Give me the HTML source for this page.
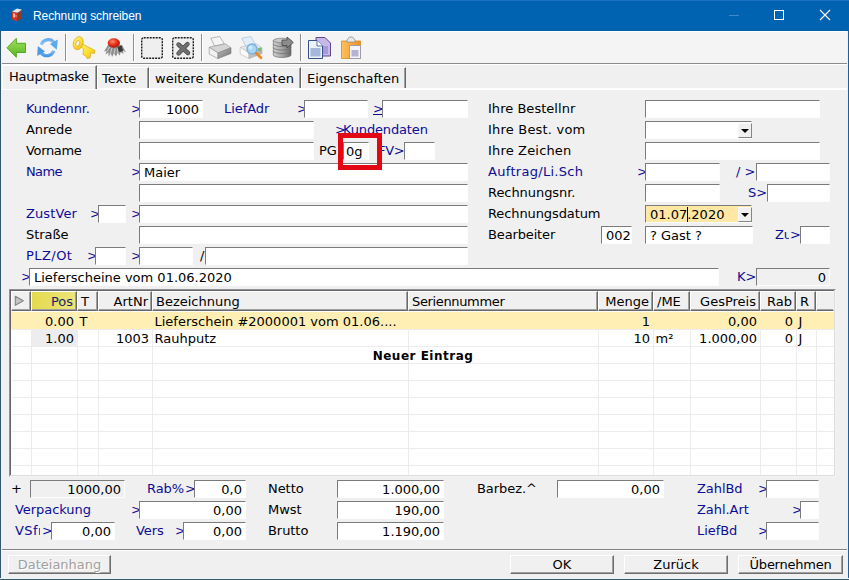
<!DOCTYPE html>
<html><head><meta charset="utf-8"><title>Rechnung schreiben</title>
<style>
html,body{margin:0;padding:0;}
body{width:849px;height:580px;overflow:hidden;background:#f0f0f0;position:relative;font-family:"DejaVu Sans","Liberation Sans",sans-serif;font-size:13px;color:#000;}
#win{position:absolute;left:0;top:0;width:849px;height:580px;background:#f0f0f0;overflow:hidden;}
#win div{position:absolute;box-sizing:border-box;white-space:nowrap;}
#title{left:0;top:0;width:849px;height:31px;background:#0063b1;box-shadow:inset 0 1px 0 #1874c2;}
#title .t{left:33px;top:9px;letter-spacing:-0.1px;font-family:"Liberation Sans",sans-serif;font-size:12px;color:#fff;line-height:15px;}
.l{line-height:17px;height:17px;font-size:13px;letter-spacing:-0.06px;}
.b{color:#0c0c96;}
.f{background:#fff;border:1px solid;border-color:#7b7b7b #fdfdfd #fdfdfd #7b7b7b;line-height:16px;font-size:13px;padding:1px 3px 0 4px;overflow:hidden;}
.r{text-align:right;}
.g{background:#f0f0f0 !important;}
.y{background:#ffe8a6 !important;}
.btn{height:19px;border:1px solid;border-color:#fff #6d6d6d #6d6d6d #fff;box-shadow:inset -1px -1px 0 #a0a0a0;background:#f0f0f0;text-align:center;line-height:18px;font-size:13px;overflow:hidden;}
.dis{color:#a0a0a0;text-shadow:1px 1px 0 #fff;}
.tab{font-size:13px;line-height:17px;}
.sep{width:2px;height:27px;top:34px;border-left:1px solid #8e8e8e;border-right:1px solid #fff;}
.hc{top:291px;height:20px;border:1px solid;border-color:#fff #696969 #696969 #fff;box-shadow:inset -1px -1px 0 #a0a0a0;background:#f0f0f0;line-height:19px;font-size:13px;padding:0 3px 0 3px;overflow:hidden;}
.c{height:17px;line-height:19px;font-size:13px;padding:0 3px 0 2.5px;overflow:hidden;}
.dd{width:14px;height:15px;background:#f0f0f0;border:1px solid;border-color:#f8f8f8 #858585 #858585 #f8f8f8;}
.dd:after{content:"";position:absolute;left:2px;top:5px;border:4px solid transparent;border-top:4px solid #000;border-bottom:none;}
</style></head><body>
<div id="win">
<div id="title"><div class="t">Rechnung schreiben</div>
<svg style="position:absolute;left:0;top:0" width="30" height="31" viewBox="0 0 30 31"><path d="M12 11.500 L17.500 12.800 L17.500 21.200 L12 19.500 Z" fill="#d6341e"/><path d="M17.500 12.800 L22 9.700 L22 18.300 L17.500 21.200 Z" fill="#8c3c24"/><path d="M12 11.500 L17 8.600 L22 9.700 L17.500 12.800 Z" fill="#ece6e0"/><path d="M13.300 13.300 L14.800 13.600 L14.800 17.600 L13.300 17.300 Z" fill="#f6e0d8"/><path d="M15.500 14.800 L16.500 15 L16.500 17 L15.500 16.800 Z" fill="#f0a890"/></svg>
<svg style="position:absolute;left:720px;top:0" width="129" height="31" viewBox="0 0 129 31"><path d="M9 15.5 H19" stroke="#3f88cc" stroke-width="1"/><rect x="54.5" y="10.5" width="9" height="9" fill="none" stroke="#fff" stroke-width="1"/><path d="M100 10 L110 20 M110 10 L100 20" stroke="#fff" stroke-width="1.1"/></svg>
</div>
<div style="left:1px;top:31px;width:847px;height:32px;background:#f4f4f4;border-top:1px solid #fff;"></div>
<div style="left:1px;top:63px;width:847px;height:1px;background:#8a8a8a;"></div>
<div style="left:1px;top:64px;width:847px;height:1px;background:#fff;"></div>
<div class="sep" style="left:65px"></div>
<div class="sep" style="left:133px"></div>
<div class="sep" style="left:201px"></div>
<div class="sep" style="left:300px"></div>
<svg style="position:absolute;left:0;top:31px" width="380" height="32" viewBox="0 31 380 32">
<defs>
<linearGradient id="gg" x1="0" y1="0" x2="0" y2="1"><stop offset="0" stop-color="#a4e05c"/><stop offset="1" stop-color="#58b424"/></linearGradient>
<linearGradient id="gb" x1="0" y1="0" x2="0" y2="1"><stop offset="0" stop-color="#8cc8f8"/><stop offset="1" stop-color="#2a7fd8"/></linearGradient>
<linearGradient id="gk" x1="0" y1="0" x2="1" y2="1"><stop offset="0" stop-color="#fff27a"/><stop offset="0.5" stop-color="#ffe030"/><stop offset="1" stop-color="#f0b818"/></linearGradient>
<radialGradient id="gr" cx="0.4" cy="0.35" r="0.7"><stop offset="0" stop-color="#ff8a6a"/><stop offset="0.5" stop-color="#e8301c"/><stop offset="1" stop-color="#a81408"/></radialGradient>
<linearGradient id="gp" x1="0" y1="0" x2="0" y2="1"><stop offset="0" stop-color="#f4f4f4"/><stop offset="1" stop-color="#a8a8a8"/></linearGradient>
<linearGradient id="gd" x1="0" y1="0" x2="1" y2="0"><stop offset="0" stop-color="#cfcfcf"/><stop offset="0.5" stop-color="#a4a4a4"/><stop offset="1" stop-color="#6a6a6a"/></linearGradient>
<linearGradient id="go" x1="0" y1="0" x2="1" y2="0"><stop offset="0" stop-color="#ffc060"/><stop offset="1" stop-color="#f09020"/></linearGradient>
<linearGradient id="gb2" gradientUnits="userSpaceOnUse" x1="0" y1="37" x2="0" y2="59"><stop offset="0" stop-color="#5aa4ea"/><stop offset="0.45" stop-color="#9ccdf6"/><stop offset="0.55" stop-color="#8cc4f4"/><stop offset="1" stop-color="#2f86dc"/></linearGradient>
<linearGradient id="gpr" x1="0" y1="0" x2="1" y2="1"><stop offset="0" stop-color="#c0c0c0"/><stop offset="1" stop-color="#6c6c6c"/></linearGradient><linearGradient id="gpr2" x1="0" y1="0" x2="1" y2="1"><stop offset="0" stop-color="#dcdcdc"/><stop offset="1" stop-color="#a0a0a0"/></linearGradient>
</defs>
<!-- back arrow -->
<path d="M7 47.800 L16.300 38.300 L16.300 43.300 L25.500 43.300 L25.500 52.500 L16.300 52.500 L16.300 57.300 Z" fill="url(#gg)" stroke="#52a822" stroke-width="1" stroke-linejoin="round"/>
<!-- refresh -->
<g fill="none" stroke="url(#gb2)" stroke-width="3.200">
<path d="M41.300 44.800 A7.300 7.300 0 0 1 54 42.500"/>
<path d="M53.800 50.800 A7.300 7.300 0 0 1 41.200 53"/>
</g>
<path d="M50 44 L57.800 39.500 L56.800 49.800 Z" fill="#5ea8ec"/>
<path d="M45 51.500 L37.200 56 L37.800 46 Z" fill="#4a9ae6"/>
<!-- key -->
<g stroke="#d8a818" stroke-width="0.7" stroke-linejoin="round">
<path d="M81.500 43.500 L95 50.500 L94.500 53.500 L91 52.800 L90 58 L87 58.500 L86 56 L83 54.500 L83.500 49 L81 47 Z" fill="url(#gk)"/>
<ellipse cx="78.200" cy="43.200" rx="4.800" ry="6.700" fill="url(#gk)" transform="rotate(18 78.200 43.200)"/>
<ellipse cx="77.800" cy="43.400" rx="1.900" ry="3" fill="#f3f3f3" transform="rotate(18 77.800 43.400)"/>
</g>
<!-- bug -->
<g>
<path d="M108 45 L104 51.500 L106.500 51 L105.500 54.500 L108.500 52.500 L108.500 56.500 L111 53.500 L112 57 L114 53.500 L116 56.500 L117.500 53 L120 55.500 L120.500 52 L123.500 54 L123 50.500 L126 52.500 L122 45 Z" fill="#8e8e8e"/>
<path d="M117.500 47 L121.500 45.500 L123 50.500 L120.500 52 L118.500 51.500 Z" fill="#3a3a3a"/>
<path d="M109.500 47 L106.500 52 M112 48 L110 54.500 M115 48.500 L114 54.500 M117.500 48.500 L118 53.500" stroke="#d4d4d4" stroke-width="0.900" fill="none"/>
<ellipse cx="113.800" cy="43" rx="6.200" ry="4.700" fill="url(#gr)"/>
</g>
<!-- dotted square -->
<rect x="141.700" y="37.700" width="20.600" height="20.600" rx="2" fill="#efefef" stroke="#1c1c1c" stroke-width="1.400" stroke-dasharray="2 1"/>
<rect x="172.700" y="37.700" width="20.600" height="20.600" rx="2" fill="#efefef" stroke="#1c1c1c" stroke-width="1.400" stroke-dasharray="2 1"/>
<path d="M178.500 44.500 L188 53 M187.500 44 L178.500 53.500" stroke="#4c4c4c" stroke-width="4.400" stroke-linecap="round"/>
<path d="M178.500 44.500 L188 53 M187.500 44 L178.500 53.500" stroke="#707070" stroke-width="3" stroke-linecap="round"/>
<!-- printer -->
<g transform="translate(0 0)">
<path d="M210.800 38.200 L219.800 36.500 L224.400 44 L214.700 46.200 Z" fill="#f4f4f4" stroke="#9c9c9c" stroke-width="0.700" stroke-linejoin="round"/>
<path d="M209.200 47.300 L214.500 46 L224.500 44 L225.500 43.900 L231 47.800 L218 53 Z" fill="#d4d4d4" stroke="#8c8c8c" stroke-width="0.600" stroke-linejoin="round"/>
<path d="M209.200 47.300 L218 53 L218 58.600 L209.200 54 Z" fill="#f2f2f2" stroke="#8c8c8c" stroke-width="0.600" stroke-linejoin="round"/>
<path d="M218 53 L231 47.800 L231 53.500 L218 58.600 Z" fill="url(#gpr)" stroke="#7c7c7c" stroke-width="0.600" stroke-linejoin="round"/>
</g>
<!-- preview -->
<g transform="translate(31 0)">
<path d="M210.800 38.200 L219.800 36.500 L224.400 44 L214.700 46.200 Z" fill="#e4eef8" stroke="#a8c0d8" stroke-width="0.700" stroke-linejoin="round"/>
<path d="M209.200 47.300 L214.500 46 L224.500 44 L225.500 43.900 L231 47.800 L218 53 Z" fill="#e8e8e8" stroke="#b8b8b8" stroke-width="0.600" stroke-linejoin="round"/>
<path d="M209.200 47.300 L218 53 L218 58.600 L209.200 54 Z" fill="#fafafa" stroke="#b8b8b8" stroke-width="0.600" stroke-linejoin="round"/>
<path d="M218 53 L231 47.800 L231 53.500 L218 58.600 Z" fill="url(#gpr2)" stroke="#a8a8a8" stroke-width="0.600" stroke-linejoin="round"/>
</g>
<circle cx="252" cy="49" r="5" fill="#a8d6f2" stroke="#78b0dc" stroke-width="1.400"/>
<circle cx="250.500" cy="47.500" r="2" fill="#d0ecfa"/>
<path d="M256.300 53.300 L261 57.800" stroke="#f08828" stroke-width="2.800" stroke-linecap="round"/>
<path d="M258 48 L261 47.500 L261 51 L258.500 51.500 Z" fill="#78b878"/>
<!-- db -->
<g>
<path d="M273.300 40.500 L273.300 55 A8.800 2.500 0 0 0 291 55 L291 40.500 Z" fill="url(#gd)" stroke="#5c5c5c" stroke-width="0.600"/>
<ellipse cx="282.150" cy="40.500" rx="8.850" ry="2.300" fill="#c8c8c8" stroke="#6c6c6c" stroke-width="0.600"/>
<path d="M273.300 44 A8.800 2.500 0 0 0 291 44 M273.300 47.500 A8.800 2.500 0 0 0 291 47.500 M273.300 51 A8.800 2.500 0 0 0 291 51" fill="none" stroke="#6c6c6c" stroke-width="0.700"/>
<path d="M282 40 L287 40 L287 37 L293.300 42.500 L287 48 L287 45.500 L282 45.500 Z" fill="#8c8c8c" stroke="#464646" stroke-width="0.800" stroke-linejoin="round"/>
</g>
<!-- copy -->
<g>
<path d="M316 37.500 L325 37.500 L330.500 43 L330.500 56 L316 56 Z" fill="#c8b8e8" stroke="#5a4890" stroke-width="1"/>
<path d="M320 46 L328 46 L328 54 L320 54 Z" fill="#a898d8"/>
<path d="M308.500 40.500 L317 40.500 L322.500 46 L322.500 58.500 L308.500 58.500 Z" fill="#eef2fa" stroke="#38508c" stroke-width="1"/>
<path d="M310.500 48 L320.500 48 L320.500 56.500 L310.500 56.500 Z" fill="#a4b8dc"/>
<path d="M317 40.500 L317 46 L322.500 46" fill="#fff" stroke="#38508c" stroke-width="0.8"/>
</g>
<!-- paste -->
<g>
<path d="M341.500 41 L360.500 41 L360.500 58.500 L341.500 58.500 Z" fill="url(#go)" stroke="#d88820" stroke-width="0.8"/>
<path d="M347 42 L347 40 L349.500 37 L352.500 37 L355 40 L355 42 Z" fill="#e8e8e8" stroke="#909090" stroke-width="0.8"/>
<path d="M349.500 45.500 L360.500 45.500 L360.500 58.500 L349.500 58.500 Z" fill="#f4f4fa" stroke="#9090b0" stroke-width="0.8"/>
<path d="M351.500 50 L358.500 50 L358.500 56.500 L351.500 56.500 Z" fill="#b4b4d0"/>
</g>
</svg>

<div style="left:2px;top:88px;width:845px;height:2px;background:#fdfdfd;"></div>
<div style="left:2px;top:65px;width:95px;height:24px;background:#f0f0f0;border:1px solid;border-color:#fff #696969 transparent #fff;border-bottom:none;box-shadow:inset -1px 0 0 #a0a0a0;"></div>
<div class="tab" style="left:9px;top:68px;letter-spacing:-0.2px;">Hauptmaske</div>
<div style="left:97px;top:67px;width:52px;height:21px;border:1px solid;border-color:#fff #696969 transparent #fff;border-bottom:none;box-shadow:inset -1px 0 0 #a0a0a0;"></div>
<div class="tab" style="left:102px;top:70px;">Texte</div>
<div style="left:149px;top:67px;width:152px;height:21px;border:1px solid;border-color:#fff #696969 transparent #fff;border-bottom:none;box-shadow:inset -1px 0 0 #a0a0a0;"></div>
<div class="tab" style="left:155px;top:70px;">weitere Kundendaten</div>
<div style="left:301px;top:67px;width:105px;height:21px;border:1px solid;border-color:#fff #696969 transparent #fff;border-bottom:none;box-shadow:inset -1px 0 0 #a0a0a0;"></div>
<div class="tab" style="left:307px;top:70px;">Eigenschaften</div>
<div class="l b" style="left:26px;top:100px;letter-spacing:-0.2px;">Kundennr.</div>
<div class="l b" style="left:131px;top:100px;">&gt;</div>
<div class="f r" style="left:139px;top:100px;width:64px;height:18px;">1000</div>
<div class="l b" style="left:224px;top:100px;">LiefAdr</div>
<div class="l b" style="left:297px;top:100px;">&gt;</div>
<div class="f " style="left:304px;top:100px;width:64px;height:18px;"></div>
<div class="l b" style="left:373px;top:100px;"><u>&gt;</u></div>
<div class="f " style="left:382px;top:100px;width:86px;height:18px;"></div>
<div class="l" style="left:26px;top:121px;">Anrede</div>
<div class="f " style="left:139px;top:121px;width:175px;height:18px;"></div>
<div class="l b" style="left:335px;top:121px;">&gt;</div>
<div class="l b" style="left:343px;top:121px;letter-spacing:-0.15px;">Kundendaten</div>
<div class="l" style="left:26px;top:142px;letter-spacing:-0.35px;">Vorname</div>
<div class="f " style="left:139px;top:142px;width:175px;height:18px;"></div>
<div class="l" style="left:319px;top:142px;">PG</div>
<div class="f " style="left:343px;top:142px;width:26px;height:18px;padding-left:2px;">0g</div>
<div class="l b" style="left:378px;top:142px;letter-spacing:-0.3px;">FV&gt;</div>
<div class="f " style="left:404px;top:142px;width:31px;height:18px;"></div>
<div class="l b" style="left:26px;top:163px;letter-spacing:-0.6px;">Name</div>
<div class="l b" style="left:131px;top:163px;">&gt;</div>
<div class="f " style="left:139px;top:163px;width:329px;height:18px;">Maier</div>
<div class="f " style="left:139px;top:184px;width:329px;height:18px;"></div>
<div class="l b" style="left:26px;top:205px;letter-spacing:0.1px;">ZustVer</div>
<div class="l b" style="left:90px;top:205px;">&gt;</div>
<div class="f " style="left:98px;top:205px;width:28px;height:18px;"></div>
<div class="l b" style="left:131px;top:205px;">&gt;</div>
<div class="f " style="left:139px;top:205px;width:329px;height:18px;"></div>
<div class="l" style="left:26px;top:226px;">Straße</div>
<div class="f " style="left:139px;top:226px;width:329px;height:18px;"></div>
<div class="l b" style="left:26px;top:247px;letter-spacing:0.45px;">PLZ/Ot</div>
<div class="l b" style="left:87px;top:247px;">&gt;</div>
<div class="f " style="left:95px;top:247px;width:31px;height:18px;"></div>
<div class="l b" style="left:131px;top:247px;">&gt;</div>
<div class="f " style="left:139px;top:247px;width:54px;height:18px;"></div>
<div class="l" style="left:200px;top:247px;">/</div>
<div class="f " style="left:205px;top:247px;width:263px;height:18px;"></div>
<div class="l b" style="left:21px;top:268px;">&gt;</div>
<div class="f " style="left:29px;top:268px;width:690px;height:18px;">Lieferscheine vom 01.06.2020</div>
<div style="left:338px;top:133px;width:44px;height:37px;border:5px solid #e30613;"></div>
<div class="l" style="left:488px;top:100px;letter-spacing:0.03px;">Ihre Bestellnr</div>
<div class="f " style="left:645px;top:100px;width:175px;height:18px;"></div>
<div class="l" style="left:488px;top:121px;letter-spacing:0.2px;">Ihre Best. vom</div>
<div class="f " style="left:645px;top:121px;width:107px;height:18px;"></div>
<div class="dd" style="left:738px;top:123px"></div>
<div class="l" style="left:488px;top:142px;letter-spacing:0.17px;">Ihre Zeichen</div>
<div class="f " style="left:645px;top:142px;width:175px;height:18px;"></div>
<div class="l b" style="left:488px;top:163px;letter-spacing:0.3px;">Auftrag/Li.Sch</div>
<div class="l b" style="left:637px;top:163px;">&gt;</div>
<div class="f " style="left:645px;top:163px;width:75px;height:18px;"></div>
<div class="l b" style="left:736px;top:163px;">/ &gt;</div>
<div class="f " style="left:756px;top:163px;width:74px;height:18px;"></div>
<div class="l" style="left:488px;top:184px;">Rechnungsnr.</div>
<div class="f " style="left:645px;top:184px;width:75px;height:18px;"></div>
<div class="l b" style="left:748px;top:184px;">S&gt;</div>
<div class="f " style="left:767px;top:184px;width:63px;height:18px;"></div>
<div class="l" style="left:488px;top:205px;letter-spacing:-0.1px;">Rechnungsdatum</div>
<div class="f y" style="left:645px;top:205px;width:107px;height:18px;">01.07.2020</div>
<div class="dd" style="left:738px;top:207px"></div>
<div style="left:687px;top:207px;width:1px;height:15px;background:#000"></div>
<div class="l" style="left:488px;top:226px;letter-spacing:-0.14px;">Bearbeiter</div>
<div class="f " style="left:601px;top:226px;width:31px;height:18px;">002</div>
<div class="f " style="left:645px;top:226px;width:108px;height:18px;">? Gast ?</div>
<div class="l b" style="left:775px;top:226px;">Zu</div>
<div class="l b" style="left:789px;top:226px;background:#f0f0f0;padding-left:1px;">&gt;</div>
<div class="f " style="left:800px;top:226px;width:30px;height:18px;"></div>
<div class="l b" style="left:737px;top:268px;">K&gt;</div>
<div class="f r g" style="left:756px;top:268px;width:74px;height:18px;">0</div>
<div style="left:9px;top:289px;width:827px;height:188px;background:#fff;border:1px solid;border-color:#8e9296 #f4f4f4 #f4f4f4 #8e9296;box-shadow:inset -1px -1px 0 #dcdcdc, inset 1px 1px 0 #666;"></div>
<div class="hc " style="left:11px;width:20px;"></div>
<div class="hc r" style="left:31px;width:46px;background:linear-gradient(90deg,#e4da4e,#ece57c);color:#1c1c6c;">Pos</div>
<div class="hc " style="left:77px;width:21px;">T</div>
<div class="hc r" style="left:98px;width:54px;">ArtNr</div>
<div class="hc " style="left:152px;width:256px;">Bezeichnung</div>
<div class="hc " style="left:408px;width:190px;"><span style="letter-spacing:-0.35px">Seriennummer</span></div>
<div class="hc r" style="left:598px;width:55px;">Menge</div>
<div class="hc " style="left:653px;width:37px;">/ME</div>
<div class="hc r" style="left:690px;width:70px;">GesPreis</div>
<div class="hc r" style="left:760px;width:36px;">Rab</div>
<div class="hc " style="left:796px;width:20px;">R</div>
<div class="hc " style="left:816px;width:18px;border-right-color:#f0f0f0;box-shadow:inset 0 -1px 0 #a0a0a0;"></div>
<svg style="position:absolute;left:13px;top:294px" width="14" height="14" viewBox="0 0 14 14"><path d="M2.300 2.300 L10.300 6.800 L2.300 11.300 Z" fill="#c4c4c4" stroke="#848484" stroke-width="1.100" stroke-linejoin="round"/></svg>
<div style="left:11px;top:312px;width:823px;height:17px;background:#ffefb5;"></div>
<div style="left:32px;top:330px;width:45px;height:16px;background:#ededef;"></div>
<div style="left:12px;top:329px;width:822px;height:1px;background:#ececec;"></div>
<div style="left:12px;top:346px;width:822px;height:1px;background:#ececec;"></div>
<div style="left:12px;top:363px;width:822px;height:1px;background:#ececec;"></div>
<div style="left:12px;top:380px;width:822px;height:1px;background:#ececec;"></div>
<div style="left:12px;top:397px;width:822px;height:1px;background:#ececec;"></div>
<div style="left:12px;top:414px;width:822px;height:1px;background:#ececec;"></div>
<div style="left:12px;top:431px;width:822px;height:1px;background:#ececec;"></div>
<div style="left:12px;top:448px;width:822px;height:1px;background:#ececec;"></div>
<div style="left:12px;top:465px;width:822px;height:1px;background:#ececec;"></div>
<div style="left:31px;top:329px;width:1px;height:146px;background:#ececec;"></div>
<div style="left:77px;top:329px;width:1px;height:146px;background:#ececec;"></div>
<div style="left:98px;top:329px;width:1px;height:146px;background:#ececec;"></div>
<div style="left:152px;top:329px;width:1px;height:146px;background:#ececec;"></div>
<div style="left:408px;top:329px;width:1px;height:146px;background:#ececec;"></div>
<div style="left:598px;top:329px;width:1px;height:146px;background:#ececec;"></div>
<div style="left:653px;top:329px;width:1px;height:146px;background:#ececec;"></div>
<div style="left:690px;top:329px;width:1px;height:146px;background:#ececec;"></div>
<div style="left:760px;top:329px;width:1px;height:146px;background:#ececec;"></div>
<div style="left:796px;top:329px;width:1px;height:146px;background:#ececec;"></div>
<div style="left:816px;top:329px;width:1px;height:146px;background:#ececec;"></div>
<div class="c r" style="left:31px;top:312px;width:46px;">0.00</div>
<div class="c " style="left:77px;top:312px;width:21px;">T</div>
<div class="c " style="left:152px;top:312px;width:256px;">Lieferschein #2000001 vom 01.06....</div>
<div class="c r" style="left:598px;top:312px;width:55px;">1</div>
<div class="c r" style="left:690px;top:312px;width:70px;">0,00</div>
<div class="c r" style="left:760px;top:312px;width:36px;">0</div>
<div class="c " style="left:796px;top:312px;width:20px;">J</div>
<div class="c r" style="left:31px;top:329px;width:46px;">1.00</div>
<div class="c r" style="left:98px;top:329px;width:54px;">1003</div>
<div class="c " style="left:152px;top:329px;width:256px;">Rauhputz</div>
<div class="c r" style="left:598px;top:329px;width:55px;">10</div>
<div class="c " style="left:653px;top:329px;width:37px;">m²</div>
<div class="c r" style="left:690px;top:329px;width:70px;">1.000,00</div>
<div class="c r" style="left:760px;top:329px;width:36px;">0</div>
<div class="c " style="left:796px;top:329px;width:20px;">J</div>
<div style="left:12px;top:348px;width:822px;height:17px;line-height:17px;text-align:center;font-family:'DejaVu Sans',sans-serif;font-weight:bold;font-size:12px;letter-spacing:0.5px;">Neuer Eintrag</div>
<div class="l" style="left:11px;top:480px;">+</div>
<div class="f r g" style="left:30px;top:480px;width:95px;height:18px;">1000,00</div>
<div class="l b" style="left:147px;top:480px;">Rab%</div>
<div class="l b" style="left:185px;top:480px;">&gt;</div>
<div class="f r" style="left:194px;top:480px;width:52px;height:18px;">0,0</div>
<div class="l" style="left:268px;top:480px;">Netto</div>
<div class="f r" style="left:337px;top:480px;width:107px;height:18px;">1.000,00</div>
<div class="l" style="left:477px;top:480px;">Barbez.^</div>
<div class="f r" style="left:557px;top:480px;width:107px;height:18px;">0,00</div>
<div class="l b" style="left:697px;top:480px;">ZahlBd</div>
<div class="l b" style="left:758px;top:480px;">&gt;</div>
<div class="f " style="left:766px;top:480px;width:53px;height:18px;"></div>
<div class="l b" style="left:15px;top:501px;">Verpackung</div>
<div class="l b" style="left:131px;top:501px;">&gt;</div>
<div class="f r" style="left:139px;top:501px;width:107px;height:18px;">0,00</div>
<div class="l" style="left:268px;top:501px;">Mwst</div>
<div class="f r" style="left:337px;top:501px;width:107px;height:18px;">190,00</div>
<div class="l b" style="left:697px;top:501px;">Zahl.Art</div>
<div class="l b" style="left:792px;top:501px;">&gt;</div>
<div class="f " style="left:800px;top:501px;width:19px;height:18px;"></div>
<div class="l b" style="left:15px;top:522px;letter-spacing:0.4px;">VSfr</div>
<div class="l b" style="left:40px;top:522px;background:#f0f0f0;padding-left:2px;">&gt;</div>
<div class="f r" style="left:51px;top:522px;width:64px;height:18px;">0,00</div>
<div class="l b" style="left:136px;top:522px;">Vers</div>
<div class="l b" style="left:175px;top:522px;">&gt;</div>
<div class="f r" style="left:183px;top:522px;width:63px;height:18px;">0,00</div>
<div class="l" style="left:268px;top:522px;">Brutto</div>
<div class="f r" style="left:337px;top:522px;width:107px;height:18px;">1.190,00</div>
<div class="l b" style="left:697px;top:522px;">LiefBd</div>
<div class="l b" style="left:758px;top:522px;">&gt;</div>
<div class="f " style="left:766px;top:522px;width:53px;height:18px;"></div>
<div style="left:1px;top:549px;width:847px;height:2px;border-top:1px solid #828282;border-bottom:1px solid #fff;"></div>
<div class="btn dis" style="left:8px;top:555px;width:103px;">Dateianhang</div>
<div class="btn " style="left:510px;top:555px;width:104px;">OK</div>
<div class="btn " style="left:624px;top:555px;width:104px;">Zurück</div>
<div class="btn " style="left:738px;top:555px;width:105px;"><span style="letter-spacing:-0.25px">Übernehmen</span></div>
<div style="left:0;top:31px;width:2px;height:549px;background:#e4f6fd;border-left:1px solid #2f586e;"></div>
<div style="left:847px;top:31px;width:2px;height:549px;background:#e4f0fa;border-right:1px solid #1f5f9c;"></div>
<div style="left:0;top:578px;width:849px;height:2px;background:#e6f6fd;border-bottom:1px solid #3a5a68;"></div>
</div>
</body></html>
